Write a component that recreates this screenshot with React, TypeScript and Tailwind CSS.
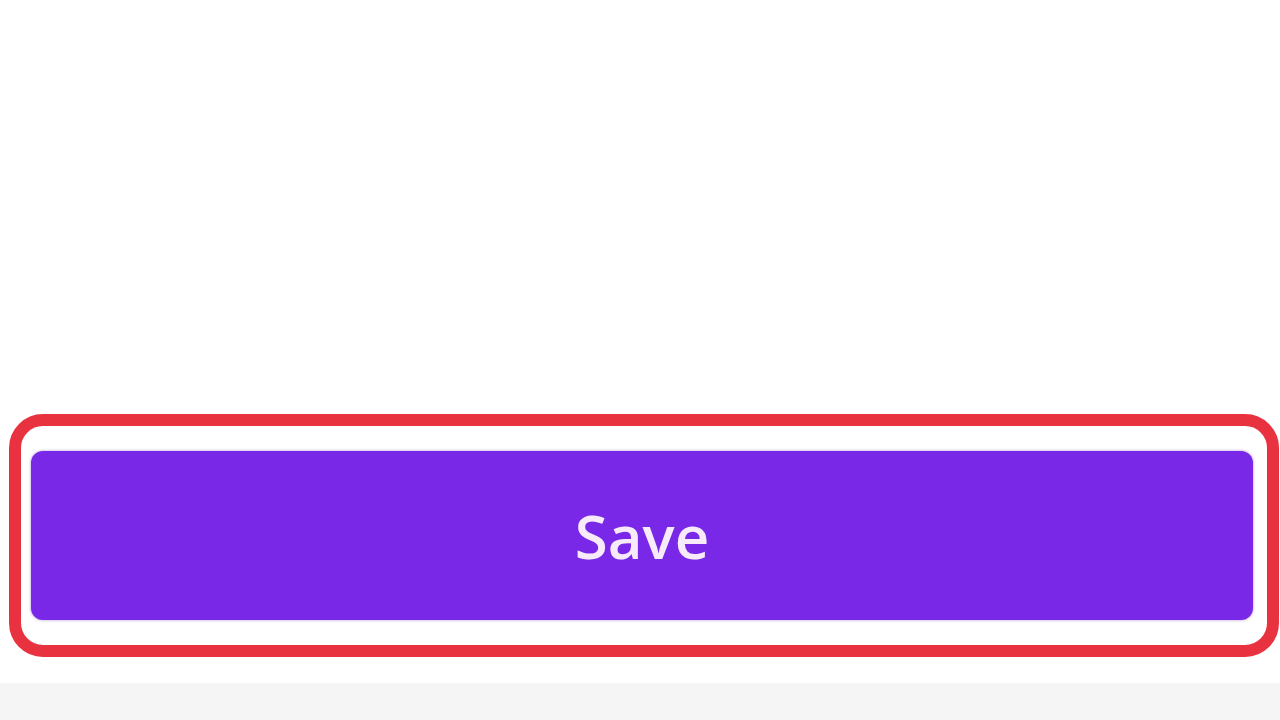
export default function App() {
  return (
    <div className="w-[1280px] h-[720px] bg-white flex flex-col" style={{ fontFamily: '"Open Sans", "Noto Sans", sans-serif' }}>
      <div className="h-[414px]" />
      <div className="ml-[9px] mr-[1px] h-[243px] border-[12px] border-[#e8323f] rounded-[34px] pl-[10px] pr-[14px] pt-[25px]">
        <button className="w-full h-[169px] rounded-[12px] bg-[#7828e6] text-[#f7eafb] text-[60px] font-semibold leading-none flex items-center justify-center shadow-[0_0_3px_rgba(90,30,180,0.5)]">
          Save
        </button>
      </div>
      <div className="h-[26px]" />
      <div className="flex-1 bg-[#f5f5f5]" />
    </div>
  );
}
